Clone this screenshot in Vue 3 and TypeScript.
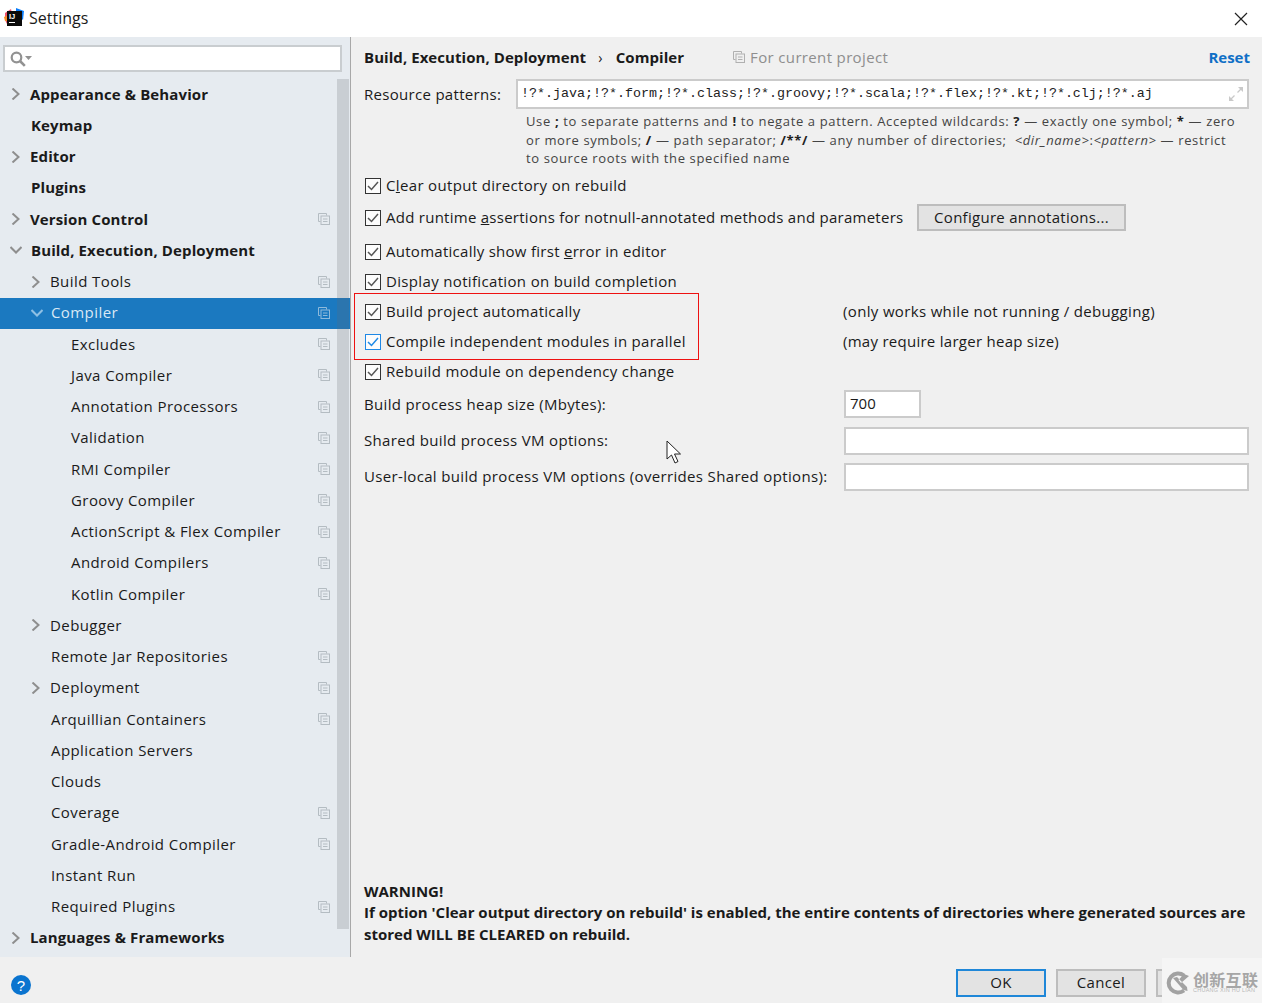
<script setup lang="ts">
interface TreeRow { label: string; level: number; arrow?: 'right' | 'down'; bold?: boolean; copy?: boolean; selected?: boolean }
const rows: TreeRow[] = [
  { label: 'Appearance & Behavior', level: 0, arrow: 'right', bold: true },
  { label: 'Keymap', level: 0, bold: true },
  { label: 'Editor', level: 0, arrow: 'right', bold: true },
  { label: 'Plugins', level: 0, bold: true },
  { label: 'Version Control', level: 0, arrow: 'right', bold: true, copy: true },
  { label: 'Build, Execution, Deployment', level: 0, arrow: 'down', bold: true },
  { label: 'Build Tools', level: 1, arrow: 'right', copy: true },
  { label: 'Compiler', level: 1, arrow: 'down', copy: true, selected: true },
  { label: 'Excludes', level: 2, copy: true },
  { label: 'Java Compiler', level: 2, copy: true },
  { label: 'Annotation Processors', level: 2, copy: true },
  { label: 'Validation', level: 2, copy: true },
  { label: 'RMI Compiler', level: 2, copy: true },
  { label: 'Groovy Compiler', level: 2, copy: true },
  { label: 'ActionScript & Flex Compiler', level: 2, copy: true },
  { label: 'Android Compilers', level: 2, copy: true },
  { label: 'Kotlin Compiler', level: 2, copy: true },
  { label: 'Debugger', level: 1, arrow: 'right' },
  { label: 'Remote Jar Repositories', level: 1, copy: true },
  { label: 'Deployment', level: 1, arrow: 'right', copy: true },
  { label: 'Arquillian Containers', level: 1, copy: true },
  { label: 'Application Servers', level: 1 },
  { label: 'Clouds', level: 1 },
  { label: 'Coverage', level: 1, copy: true },
  { label: 'Gradle-Android Compiler', level: 1, copy: true },
  { label: 'Instant Run', level: 1 },
  { label: 'Required Plugins', level: 1, copy: true },
  { label: 'Languages & Frameworks', level: 0, arrow: 'right', bold: true },
]
const patterns = '!?*.java;!?*.form;!?*.class;!?*.groovy;!?*.scala;!?*.flex;!?*.kt;!?*.clj;!?*.aj'
</script>

<template>
  <div class="window">
    <header class="titlebar">
      <svg class="logo" width="20" height="20" viewBox="0 0 20 20">
        <path d="M1 5 L7 1 L9 10 L4 18 L1 12Z" fill="#f0506e" />
        <path d="M0 9 L4 7 L5 13 L1 13Z" fill="#f98b2a" />
        <path d="M12 0 L20 3 L19 12 L12 6Z" fill="#087cfa" />
        <rect x="3" y="3" width="15" height="15" fill="#0a0a0a" />
        <text x="5" y="11" class="logo-text">IJ</text>
        <rect x="5" y="14" width="6" height="1" fill="#fff" />
      </svg>
      <span class="title">Settings</span>
      <svg class="close" width="14" height="14" viewBox="0 0 14 14"><path d="M1 1 L13 13 M13 1 L1 13" stroke="#222" stroke-width="1.2" /></svg>
    </header>

    <div class="main">
      <aside class="sidebar">
        <div class="search">
          <svg width="24" height="16" viewBox="0 0 24 16">
            <circle cx="6.5" cy="6.5" r="4.8" fill="none" stroke="#929292" stroke-width="2.2" />
            <path d="M10 10 L14.8 14.8" stroke="#929292" stroke-width="2.6" />
            <path d="M15 5 H22 L18.5 9Z" fill="#929292" />
          </svg>
        </div>
        <div class="tree-wrap">
          <ul class="tree">
            <li v-for="r in rows" :key="r.label" class="row" :class="[`lv${r.level}`, { sel: r.selected, bold: r.bold, 'has-right': r.arrow === 'right' }]">
              <svg v-if="r.arrow" class="arrow" width="12" height="12" viewBox="0 0 12 12">
                <path v-if="r.arrow === 'right'" d="M2.5 0.5 L8.5 6 L2.5 11.5" />
                <path v-else d="M0.5 3 L6 8.5 L11.5 3" />
              </svg>
              <span class="label">{{ r.label }}</span>
              <svg v-if="r.copy" class="copy" width="12" height="12" viewBox="0 0 12 12">
                <path d="M8.5 2.5 V0.5 H0.5 V8.5 H2.5" fill="none" />
                <rect x="3" y="3" width="8.5" height="8.5" fill="none" />
                <path d="M5 6 H9.5 M5 8.5 H9.5" />
              </svg>
            </li>
          </ul>
          <div class="scroll"></div>
        </div>
      </aside>

      <section class="content">
        <div class="crumbs">
          <b>Build, Execution, Deployment</b>
          <span class="sep">›</span>
          <b>Compiler</b>
          <span class="scope">
            <svg class="scope-icon" width="12" height="12" viewBox="0 0 12 12">
              <path d="M8.5 2.5 V0.5 H0.5 V8.5 H2.5" fill="none" />
              <rect x="3" y="3" width="8.5" height="8.5" fill="none" />
              <path d="M5 6 H9.5 M5 8.5 H9.5" />
            </svg>
            For current project
          </span>
          <a class="reset">Reset</a>
        </div>

        <div class="resource">
          <span class="res-label">Resource patterns:</span>
          <div class="input patterns">
            <span class="mono">{{ patterns }}</span>
            <svg width="16" height="16" viewBox="0 0 16 16" class="expand">
              <path d="M10 1 H15 V6Z M1 10 V15 H6Z" fill="#c9c9c9" />
              <path d="M13 3 L9.5 6.5 M3 13 L6.5 9.5" stroke="#c9c9c9" stroke-width="1.3" />
            </svg>
          </div>
        </div>

        <p class="help">
          Use <b>;</b> to separate patterns and <b>!</b> to negate a pattern. Accepted wildcards: <b>?</b> — exactly one symbol; <b>*</b> — zero<br />
          or more symbols; <b>/</b> — path separator; <b>/**/</b> — any number of directories; &nbsp;<i>&lt;dir_name&gt;</i>:<i>&lt;pattern&gt;</i> — restrict<br />
          to source roots with the specified name
        </p>

        <label class="check c1"><span class="box"><svg viewBox="0 0 14 14"><path d="M2 7 L5.5 10.5 L12 3" /></svg></span><span class="txt">C<u>l</u>ear output directory on rebuild</span></label>
        <div class="check c2">
          <span class="box"><svg viewBox="0 0 14 14"><path d="M2 7 L5.5 10.5 L12 3" /></svg></span>
          <span class="txt tight">Add runtime <u>a</u>ssertions for notnull-annotated methods and parameters</span>
          <button class="btn configure"><span class="txt">Configure annotations...</span></button>
        </div>
        <label class="check c3"><span class="box"><svg viewBox="0 0 14 14"><path d="M2 7 L5.5 10.5 L12 3" /></svg></span><span class="txt tighter">Automatically show first <u>e</u>rror in editor</span></label>
        <label class="check c4"><span class="box"><svg viewBox="0 0 14 14"><path d="M2 7 L5.5 10.5 L12 3" /></svg></span><span class="txt">Display notification on build completion</span></label>

        <div class="marked">
          <div class="check c5">
            <span class="box"><svg viewBox="0 0 14 14"><path d="M2 7 L5.5 10.5 L12 3" /></svg></span>
            <span class="txt marked-label">Build project automatically</span>
            <span class="txt">(only works while not running / debugging)</span>
          </div>
          <div class="check c5">
            <span class="box focus"><svg viewBox="0 0 14 14"><path d="M2 7 L5.5 10.5 L12 3" /></svg></span>
            <span class="txt marked-label">Compile independent modules in parallel</span>
            <span class="txt tighter">(may require larger heap size)</span>
          </div>
          <div class="redbox"></div>
        </div>
        <label class="check c5"><span class="box"><svg viewBox="0 0 14 14"><path d="M2 7 L5.5 10.5 L12 3" /></svg></span><span class="txt">Rebuild module on dependency change</span></label>

        <div class="field f1"><span class="txt">Build process heap size (Mbytes):</span><div class="input heap">700</div></div>
        <div class="field f2"><span class="txt">Shared build process VM options:</span><div class="input wide"></div></div>
        <div class="field f2"><span class="txt">User-local build process VM options (overrides Shared options):</span><div class="input wide"></div></div>

        <div class="warning">
          WARNING!<br />
          If option 'Clear output directory on rebuild' is enabled, the entire contents of directories where generated sources are<br />
          stored WILL BE CLEARED on rebuild.
        </div>

        <svg class="pointer" width="18" height="26" viewBox="0 0 18 26">
          <path d="M1 1 V19 L5.5 15 L9 23 L12 21.5 L8.5 14 L14.5 14Z" fill="#fff" stroke="#222" stroke-width="1" />
        </svg>
      </section>
    </div>

    <footer class="footer">
      <svg class="help-icon" width="20" height="20" viewBox="0 0 20 20">
        <circle cx="10" cy="10" r="10" fill="#0a74cf" />
        <text x="10" y="15.5" class="help-q">?</text>
      </svg>
      <div class="actions">
        <button class="btn ok"><span class="txt">OK</span></button>
        <button class="btn cancel"><span class="txt">Cancel</span></button>
        <span class="btn stub"></span>
      </div>
      <div class="mark">
        <svg width="26" height="24" viewBox="0 0 26 24">
          <path d="M19 4.5 A9.5 9.5 0 1 0 19 19.5" fill="none" stroke="#a2a2a2" stroke-width="4" />
          <path d="M8 7 L12 6 L22 16 L22.5 20 L18.5 19Z M24 5 L19 3 L13.5 9 L16 12Z" fill="#a2a2a2" />
        </svg>
        <div class="mark-text">
          <div class="mark-cn">创新互联</div>
          <div class="mark-en">CHUANG XIN HU LIAN</div>
        </div>
      </div>
    </footer>
  </div>
</template>

<style>
html, body { margin: 0; background: #f0f0f0; }
</style>

<style scoped>
.window {
  position: relative;
  width: 1262px;
  height: 1003px;
  display: flex;
  flex-direction: column;
  overflow: hidden;
  background: #f0f0f0;
  color: #1a1a1a;
  font-family: "Open Sans", "Noto Sans", sans-serif;
  font-size: 15px;
  letter-spacing: 0.34px;
}
.txt { display: block; margin-top: -2px; }
.tight { letter-spacing: 0.26px; }
.tighter { letter-spacing: 0.27px; }
.titlebar {
  height: 37px;
  flex: none;
  background: #fff;
  display: flex;
  align-items: center;
  padding-left: 4px;
}
.logo { margin-right: 5px; margin-top: -1px; }
.logo-text { font: bold 7.5px "Liberation Sans", sans-serif; fill: #fff; letter-spacing: 0; }
.title { font-size: 16px; color: #1a1a1a; letter-spacing: 0; margin-top: -2px; }
.close { margin-left: auto; margin-right: 14px; }

.main { flex: 1; display: flex; min-height: 0; }
.sidebar {
  width: 350px;
  flex: none;
  background: #e6ebf0;
  border-right: 1px solid #a8a8a8;
  display: flex;
  flex-direction: column;
}
.search {
  margin: 8px 8px 0 3px;
  background: #fff;
  border: 2px solid #c9cdd0;
  height: 23px;
  display: flex;
  align-items: center;
  padding-left: 5px;
}
.tree-wrap { flex: 1; position: relative; margin-top: 7px; }
.tree { list-style: none; margin: 0; padding: 0; }
.row {
  height: 31.25px;
  display: flex;
  align-items: center;
  position: relative;
  box-sizing: border-box;
}
.row .label { margin-top: -2px; letter-spacing: 0.42px; }
.row.lv0 { padding-left: 31px; }
.row.lv1 { padding-left: 51px; }
.row.lv2 { padding-left: 71px; }
.row.has-right { padding-left: 30px; }
.row.lv1.has-right { padding-left: 50px; }
.row.bold .label { font-weight: 700; letter-spacing: 0.12px; }
.row.sel { background: #1b79c0; color: #fff; }
.row.sel .label { color: #d9e8f5; }
.arrow { position: absolute; top: 9px; fill: none; stroke: #8e8e8e; stroke-width: 2; }
.row.lv0 .arrow { left: 10px; }
.row.lv1 .arrow { left: 30px; }
.row.sel .arrow { stroke: #8fc0e4; left: 31px; }
.copy {
  position: absolute;
  left: 318px;
  top: 9px;
  stroke: #b4bcc2;
  stroke-width: 1;
  fill: none;
}
.row.sel .copy { stroke: #8fbadb; }
.scroll {
  position: absolute;
  left: 337px;
  top: 0;
  width: 12px;
  height: 850px;
  background: rgba(100, 105, 110, 0.22);
}

.content {
  flex: 1;
  position: relative;
  padding: 0 12px 0 13px;
  min-width: 0;
}
.crumbs {
  height: 40px;
  padding-bottom: 1px;
  display: flex;
  align-items: center;
}
.crumbs b { font-weight: 700; letter-spacing: 0.06px; }
.sep { margin: 0 13px 0 12px; font-size: 14px; }
.scope { margin-left: 49px; color: #8e8e8e; display: flex; align-items: center; gap: 5px; letter-spacing: 0.35px; }
.scope-icon { stroke: #b0b0b0; stroke-width: 1; fill: none; }
.reset { margin-left: auto; color: #0f6fc6; font-weight: 700; letter-spacing: 0; }

.resource { display: flex; align-items: center; height: 30px; margin-top: 1px; }
.res-label { width: 152px; flex: none; letter-spacing: 0.3px; }
.input {
  background: #fff;
  border: 2px solid #cbcbcb;
  box-sizing: border-box;
}
.patterns {
  width: 733px;
  height: 30px;
  display: flex;
  align-items: center;
  padding-left: 3px;
  justify-content: space-between;
  padding-right: 3px;
}
.mono {
  font-family: "Liberation Mono", monospace;
  font-size: 13.33px;
  letter-spacing: 0;
  color: #222;
  margin-top: -2px;
}
.help {
  margin: 3px 0 0 162px;
  font-size: 13px;
  line-height: 18.5px;
  letter-spacing: 0.63px;
  color: #444;
  white-space: nowrap;
}
.help b { color: #222; }
.check { display: flex; align-items: center; }
.c1 { height: 30px; margin-top: 3px; }
.c2 { height: 30px; margin-top: 2px; }
.c3 { height: 30px; margin-top: 4px; }
.c4 { height: 30px; margin-top: 0; }
.c5 { height: 30px; }
.box {
  width: 14px;
  height: 14px;
  border: 1px solid #333;
  margin: 0 5px 0 1px;
  flex: none;
  background: #fcfcfc;
  display: block;
}
.box svg { display: block; width: 14px; height: 14px; fill: none; stroke: #555; stroke-width: 1.5; }
.box.focus { border-color: #1e88e5; }
.box.focus svg { stroke: #1e88e5; }
.marked { position: relative; }
.marked-label { width: 457px; flex: none; letter-spacing: 0.3px; }
.redbox {
  position: absolute;
  left: -10px;
  top: -4px;
  width: 343px;
  height: 65px;
  border: 1px solid #ee1111;
}
.field { display: flex; align-items: center; }
.f1 { height: 30px; margin-top: 2px; }
.f1 .txt { margin-top: 0; }
.f2 { height: 28px; margin-top: 8px; }
.field > .txt { width: 480px; flex: none; }
.heap {
  width: 77px;
  height: 28px;
  padding-left: 4px;
  line-height: 22px;
  letter-spacing: 0;
}
.wide { width: 405px; height: 28px; }
.warning {
  position: absolute;
  left: 13px;
  top: 843.5px;
  font-weight: 700;
  line-height: 21.5px;
  white-space: nowrap;
  letter-spacing: 0;
}
.pointer { position: absolute; left: 315px; top: 403px; }

.btn {
  font: inherit;
  letter-spacing: inherit;
  color: #1a1a1a;
  background: #e3e3e3;
  border: 2px solid #bdbdbd;
  box-sizing: border-box;
  padding: 0;
}
.configure {
  position: absolute;
  left: 566px;
  top: 167px;
  width: 209px;
  height: 27px;
  letter-spacing: 0.28px;
}
.footer {
  height: 46px;
  flex: none;
  position: relative;
  display: flex;
  align-items: center;
}
.help-icon { position: absolute; left: 11px; top: 18px; }
.help-q { font: 15px "Liberation Sans", sans-serif; fill: #fff; text-anchor: middle; letter-spacing: 0; }
.actions {
  position: absolute;
  left: 956px;
  top: 12px;
  display: flex;
  gap: 10px;
}
.ok, .cancel { width: 90px; height: 28px; }
.ok { border-color: #1f87d8; }
.stub { width: 30px; height: 28px; display: block; }
.mark {
  position: absolute;
  left: 1162px;
  top: 1px;
  right: 0;
  bottom: 0;
  background: #f5f5f5;
  display: flex;
  align-items: center;
  padding: 4px 0 0 3px;
  box-sizing: border-box;
  gap: 2px;
}
.mark-cn {
  font-family: "Noto Sans CJK SC", sans-serif;
  font-size: 16px;
  font-weight: 700;
  line-height: 16px;
  color: #a6a6a6;
  letter-spacing: 0.3px;
}
.mark-en {
  font-family: "Liberation Sans", sans-serif;
  font-size: 5.5px;
  line-height: 7px;
  color: #b8b8b8;
  letter-spacing: 0.25px;
  white-space: nowrap;
}
</style>
